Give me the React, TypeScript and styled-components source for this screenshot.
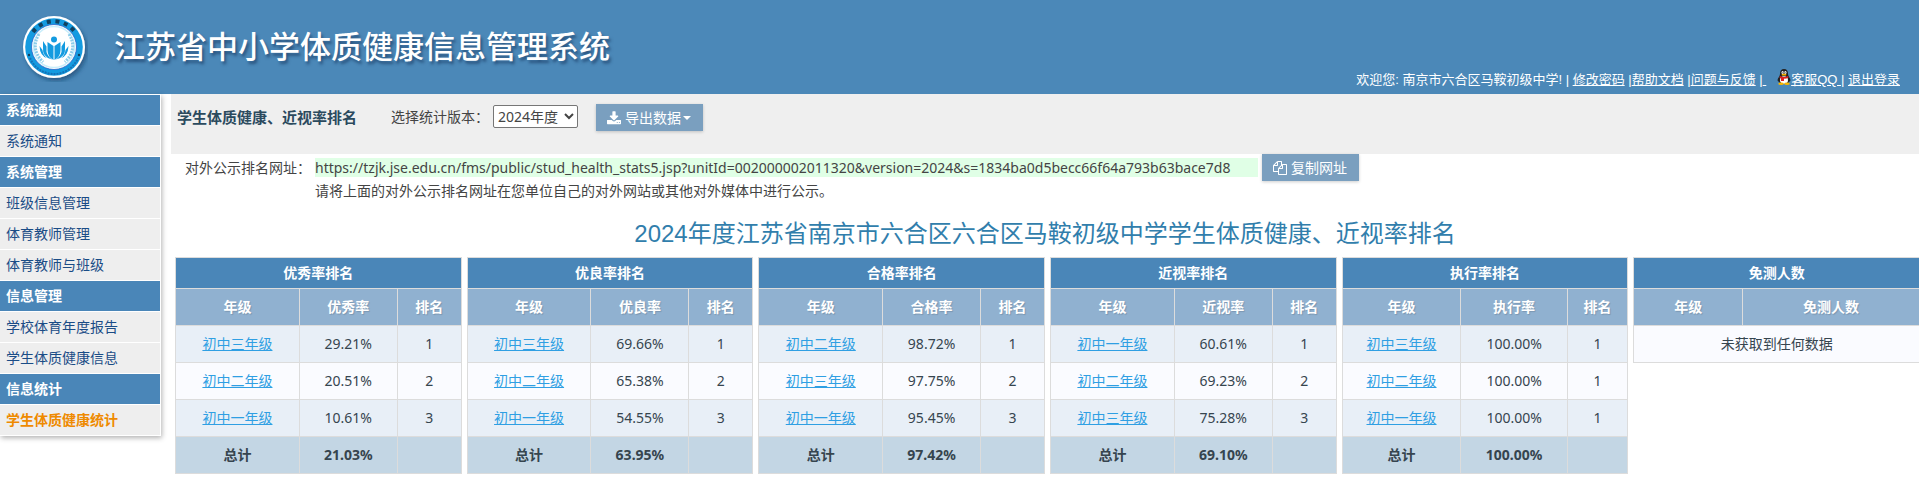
import React from "react";
import styled, { createGlobalStyle } from "styled-components";

const GlobalStyle = createGlobalStyle`
  * { box-sizing: border-box; }
  body {
    margin: 0;
    background: #fff;
    color: #444;
    font: 14px/20px "Noto Sans", "Noto Sans CJK SC", sans-serif;
    overflow-x: hidden;
  }
  h1, h2, h3, p { margin: 0; }
`;

const Header = styled.header`
  display: flex;
  justify-content: space-between;
  height: 94px;
  padding: 0 19px 0 22px;
  background: #4b88b8;
  color: #fff;
`;

const Brand = styled.div`
  display: flex;
  align-items: center;
  gap: 26px;
`;

const SystemName = styled.h1`
  padding-bottom: 4px;
  font: 500 31px/40px "Noto Sans CJK SC", sans-serif;
  text-shadow: 2px 3px 3px rgba(20, 50, 90, 0.6);
  white-space: nowrap;
`;

const UserBar = styled.div`
  align-self: flex-end;
  padding-bottom: 4px;
  font: 13px/20px "Liberation Sans", "Noto Sans CJK SC", sans-serif;
  white-space: pre;

  a { color: inherit; }
  svg { vertical-align: -1px; }
`;

const Body = styled.div`
  display: flex;
  align-items: flex-start;
  gap: 10px;
`;

const Sidebar = styled.nav`
  flex: none;
  width: 161px;
  padding-top: 1px;
  border-right: 1px solid #fff;
  box-shadow: 1px 2px 5px rgba(0, 0, 0, 0.3);
`;

const GroupTitle = styled.h2`
  height: 31px;
  padding-left: 6px;
  border-bottom: 1px solid #fff;
  background: #4a86b8;
  color: #fff;
  font-size: 14px;
  line-height: 30px;
`;

const MenuLink = styled.a<{ $active?: boolean }>`
  display: block;
  height: 31px;
  padding-left: 6px;
  border-bottom: 1px solid #fff;
  background: #eee;
  color: ${(p) => (p.$active ? "#ee8a00" : "#1a4c86")};
  font-weight: ${(p) => (p.$active ? 700 : 400)};
  line-height: 30px;
  text-decoration: none;
`;

const Main = styled.main`
  flex: 1;
  min-width: 0;
`;

const Toolbar = styled.div`
  display: flex;
  align-items: flex-start;
  height: 60px;
  padding: 10px 6px;
  background: #efefef;
`;

const ToolbarTitle = styled.h2`
  margin-right: 34px;
  color: #2b4a5e;
  font-size: 15px;
  line-height: 27px;
`;

const VersionLabel = styled.label`
  line-height: 26px;
`;

const VersionSelect = styled.select`
  width: 85px;
  height: 23px;
  margin: 1px 18px 0 4px;
  padding: 0;
  border: 1px solid #767676;
  border-radius: 2px;
  background-color: #fff;
  color: #444;
  font: inherit;
`;

const ActionButton = styled.button`
  display: inline-flex;
  align-items: center;
  gap: 4px;
  height: 27px;
  padding: 0 12px 0 11px;
  border: 0;
  background: #7a9fbf;
  box-shadow: 0 1px 3px rgba(0, 0, 0, 0.2);
  color: #fff;
  font: inherit;
  white-space: nowrap;
`;

const Caret = styled.span`
  margin-left: -2px;
  border: 4px solid transparent;
  border-top-color: #fff;
  border-bottom: 0;
`;

const ShareInfo = styled.section`
  display: grid;
  grid-template-columns: 130px 1fr;
  padding-left: 14px;
`;

const ShareLabel = styled.span`
  line-height: 27px;
`;

const ShareRow = styled.div`
  display: flex;
  align-items: center;
  gap: 4px;
  height: 27px;
`;

const ShareUrl = styled.span`
  min-width: 943px;
  background: #e0ffe6;
  line-height: 19px;
  white-space: nowrap;
`;

const ShareHint = styled.p`
  grid-column: 2;
`;

const PageTitle = styled.h2`
  margin: 16px 0 6px;
  color: #317eac;
  font: 400 24px/34px "Liberation Sans", "Noto Sans CJK SC", sans-serif;
  text-align: center;
`;

const TableGrid = styled.div`
  display: grid;
  grid-template-columns: repeat(6, minmax(0, 1fr));
  align-items: start;
  gap: 5px;
  margin: 0 -1px 0 4px;
`;

const RankTable = styled.table`
  width: 100%;
  border-collapse: collapse;
  table-layout: fixed;
  color: #36454f;
  text-align: center;

  th, td {
    height: 37px;
    padding: 0;
    border: 1px solid #dcdcdc;
  }
  thead th { color: #fff; }
  thead tr:first-child th {
    height: 31px;
    background: #4a86b8;
  }
  thead tr:last-child th {
    background: #90b1d0;
    text-shadow: 1px 1px 1px rgba(0, 0, 0, 0.15);
  }
  tbody tr { background: #fafbff; }
  tbody tr:nth-child(odd) { background: #e8eff7; }
  tfoot { background: #c3d6e4; }
`;

const EmptyCell = styled.td`
  background: #fafbff;
`;

const GradeLink = styled.a`
  color: #2f9fe3;
`;

function Logo() {
  return (
    <svg width="66" height="70" viewBox="0 0 66 70" aria-hidden="true">
      <defs>
        <filter id="logoShadow" x="-20%" y="-20%" width="150%" height="150%">
          <feDropShadow dx="2" dy="3" stdDeviation="2" floodColor="#123a66" floodOpacity="0.6" />
        </filter>
      </defs>
      <circle cx="32" cy="35" r="31" fill="#fff" filter="url(#logoShadow)" />
      <circle cx="32" cy="35" r="28.8" fill="#149be0" />
      <path d="M8 46A26 26 0 0 0 56 46" fill="none" stroke="#1571b5" strokeWidth="2" strokeDasharray="2 1" />
      <path d="M11 20A26 26 0 0 1 53 20" fill="none" stroke="#12415f" strokeWidth="4" strokeDasharray="4 4.6" />
      <circle cx="7" cy="43" r="1.2" fill="#12415f" />
      <circle cx="57" cy="43" r="1.2" fill="#12415f" />
      <circle cx="32" cy="35" r="22.5" fill="#fff" stroke="#2a62c8" strokeWidth="0.8" />
      <circle cx="32" cy="35" r="20.5" fill="#fff" stroke="#c9eefb" strokeWidth="1.5" />
      <path d="M17 22Q8 37 21 50M47 22Q56 37 43 50" fill="none" stroke="#8ccdea" strokeWidth="3" strokeDasharray="2 1" />
      <circle cx="32" cy="27.6" r="3" fill="#149be0" />
      <path d="M25.500 30L31.500 34V48Q25.500 45 25.500 38ZM38.500 30L32.500 34V48Q38.500 45 38.500 38Z" fill="#149be0" />
      <path d="M21 29L24.500 34.500V40Q26 45 30 47.500Q20 45 21 36ZM43 29L39.500 34.500V40Q38 45 34 47.500Q44 45 43 36Z" fill="#149be0" />
      <path d="M17.500 34L20.500 38Q21 43 25 46Q18 44 17.500 34ZM46.500 34L43.500 38Q43 43 39 46Q46 44 46.500 34Z" fill="#149be0" />
    </svg>
  );
}

function PenguinIcon() {
  return (
    <svg width="14" height="16" viewBox="0 0 14 16" aria-hidden="true">
      <path d="M3 5Q3 0 7 0T11 5Q11 7 13 9.500Q14 12 12.500 12.500L11 14H3L1.500 12.500Q0 12 1 9.500Q3 7 3 5Z" fill="#222" />
      <ellipse cx="7" cy="11" rx="4" ry="3.800" fill="#fff" />
      <ellipse cx="5.600" cy="3.500" rx="1.100" ry="1.500" fill="#fff" />
      <ellipse cx="8.400" cy="3.500" rx="1.100" ry="1.500" fill="#fff" />
      <circle cx="5.900" cy="3.700" r="0.500" />
      <circle cx="8.100" cy="3.700" r="0.500" />
      <ellipse cx="7" cy="5.700" rx="2.500" ry="0.900" fill="#f8b500" />
      <path d="M3 7Q7 9 11 7L11.500 8.800Q9 9.800 7 9.600V12H4V9.300L2.500 8.700Z" fill="#e02020" />
      <ellipse cx="4" cy="14.800" rx="2.800" ry="1.200" fill="#f8b500" />
      <ellipse cx="10" cy="14.800" rx="2.800" ry="1.200" fill="#f8b500" />
    </svg>
  );
}

function DownloadIcon() {
  return (
    <svg width="14" height="14" viewBox="64 0 1664 1600" fill="currentColor" aria-hidden="true">
      <path d="M1344 1344q0-26-19-45t-45-19-45 19-19 45 19 45 45 19 45-19 19-45zm256 0q0-26-19-45t-45-19-45 19-19 45 19 45 45 19 45-19 19-45zm128-224v320q0 40-28 68t-68 28h-1472q-40 0-68-28t-28-68v-320q0-40 28-68t68-28h465l135 136q58 56 136 56t136-56l136-136h464q40 0 68 28t28 68zm-325-569q17 41-14 70l-448 448q-18 19-45 19t-45-19l-448-448q-31-29-14-70 17-39 59-39h256v-448q0-26 19-45t45-19h256q26 0 45 19t19 45v448h256q42 0 59 39z" />
    </svg>
  );
}

function CopyIcon() {
  return (
    <svg width="14" height="14" viewBox="0 0 1792 1792" fill="currentColor" aria-hidden="true">
      <path d="M1696 384q40 0 68 28t28 68v1216q0 40-28 68t-68 28h-960q-40 0-68-28t-28-68v-288h-544q-40 0-68-28t-28-68v-672q0-40 20-88t48-76l408-408q28-28 76-48t88-20h416q40 0 68 28t28 68v328q68-40 128-40h416zm-544 213l-299 299h299v-299zm-640-384l-299 299h299v-299zm196 647l316-316v-416h-384v416q0 40-28 68t-68 28h-416v640h512v-256q0-40 20-88t48-76zm956 804v-1152h-384v416q0 40-28 68t-68 28h-416v640h896z" />
    </svg>
  );
}

const menu = [
  { title: "系统通知", items: ["系统通知"] },
  { title: "系统管理", items: ["班级信息管理", "体育教师管理", "体育教师与班级"] },
  { title: "信息管理", items: ["学校体育年度报告", "学生体质健康信息"] },
  { title: "信息统计", items: ["学生体质健康统计"] },
];
const activeItem = "学生体质健康统计";

interface Ranking {
  title: string;
  columns: string[];
  widths: number[];
  rows: string[][];
  total?: string;
}

const regular = [62, 49, 32];

const rankings: Ranking[] = [
  {
    title: "优秀率排名",
    columns: ["年级", "优秀率", "排名"],
    widths: regular,
    rows: [["初中三年级", "29.21%", "1"], ["初中二年级", "20.51%", "2"], ["初中一年级", "10.61%", "3"]],
    total: "21.03%",
  },
  {
    title: "优良率排名",
    columns: ["年级", "优良率", "排名"],
    widths: regular,
    rows: [["初中三年级", "69.66%", "1"], ["初中二年级", "65.38%", "2"], ["初中一年级", "54.55%", "3"]],
    total: "63.95%",
  },
  {
    title: "合格率排名",
    columns: ["年级", "合格率", "排名"],
    widths: regular,
    rows: [["初中二年级", "98.72%", "1"], ["初中三年级", "97.75%", "2"], ["初中一年级", "95.45%", "3"]],
    total: "97.42%",
  },
  {
    title: "近视率排名",
    columns: ["年级", "近视率", "排名"],
    widths: regular,
    rows: [["初中一年级", "60.61%", "1"], ["初中二年级", "69.23%", "2"], ["初中三年级", "75.28%", "3"]],
    total: "69.10%",
  },
  {
    title: "执行率排名",
    columns: ["年级", "执行率", "排名"],
    widths: [59, 53, 30],
    rows: [["初中三年级", "100.00%", "1"], ["初中二年级", "100.00%", "1"], ["初中一年级", "100.00%", "1"]],
    total: "100.00%",
  },
  { title: "免测人数", columns: ["年级", "免测人数"], widths: [54, 88], rows: [] },
];

function RankingTable({ title, columns, widths, rows, total }: Ranking) {
  return (
    <RankTable>
      <colgroup>
        {widths.map((w, i) => <col key={i} width={w} />)}
      </colgroup>
      <thead>
        <tr><th colSpan={columns.length}>{title}</th></tr>
        <tr>{columns.map((c) => <th key={c} scope="col">{c}</th>)}</tr>
      </thead>
      <tbody>
        {rows.map(([grade, rate, rank]) => (
          <tr key={grade}>
            <td><GradeLink href="#">{grade}</GradeLink></td>
            <td>{rate}</td>
            <td>{rank}</td>
          </tr>
        ))}
        {rows.length === 0 && (
          <tr><EmptyCell colSpan={columns.length}>未获取到任何数据</EmptyCell></tr>
        )}
      </tbody>
      {total && (
        <tfoot>
          <tr><th scope="row">总计</th><th>{total}</th><td /></tr>
        </tfoot>
      )}
    </RankTable>
  );
}

export default function App() {
  return (
    <>
      <GlobalStyle />
      <Header>
        <Brand>
          <Logo />
          <SystemName>江苏省中小学体质健康信息管理系统</SystemName>
        </Brand>
        <UserBar>
          {"欢迎您: 南京市六合区马鞍初级中学! | "}
          <a href="#">修改密码</a>{" |"}
          <a href="#">帮助文档</a>{" |"}
          <a href="#">问题与反馈</a>{" |"}
          <a href="#">{" "}</a>{"   "}
          <PenguinIcon />
          <a href="#">{"客服QQ "}</a>{"| "}
          <a href="#">退出登录</a>
        </UserBar>
      </Header>
      <Body>
        <Sidebar>
          {menu.map((group) => (
            <React.Fragment key={group.title}>
              <GroupTitle>{group.title}</GroupTitle>
              {group.items.map((item) => (
                <MenuLink key={item} href="#" $active={item === activeItem}>{item}</MenuLink>
              ))}
            </React.Fragment>
          ))}
        </Sidebar>
        <Main>
          <Toolbar>
            <ToolbarTitle>学生体质健康、近视率排名</ToolbarTitle>
            <VersionLabel htmlFor="version">选择统计版本：</VersionLabel>
            <VersionSelect id="version" defaultValue="2024">
              <option value="2024">2024年度</option>
            </VersionSelect>
            <ActionButton type="button">
              <DownloadIcon />
              导出数据
              <Caret />
            </ActionButton>
          </Toolbar>
          <ShareInfo>
            <ShareLabel>对外公示排名网址：</ShareLabel>
            <ShareRow>
              <ShareUrl>https://tzjk.jse.edu.cn/fms/public/stud_health_stats5.jsp?unitId=002000002011320&amp;version=2024&amp;s=1834ba0d5becc66f64a793b63bace7d8</ShareUrl>
              <ActionButton type="button">
                <CopyIcon />
                复制网址
              </ActionButton>
            </ShareRow>
            <ShareHint>请将上面的对外公示排名网址在您单位自己的对外网站或其他对外媒体中进行公示。</ShareHint>
          </ShareInfo>
          <PageTitle>2024年度江苏省南京市六合区六合区马鞍初级中学学生体质健康、近视率排名</PageTitle>
          <TableGrid>
            {rankings.map((r) => <RankingTable key={r.title} {...r} />)}
          </TableGrid>
        </Main>
      </Body>
    </>
  );
}
